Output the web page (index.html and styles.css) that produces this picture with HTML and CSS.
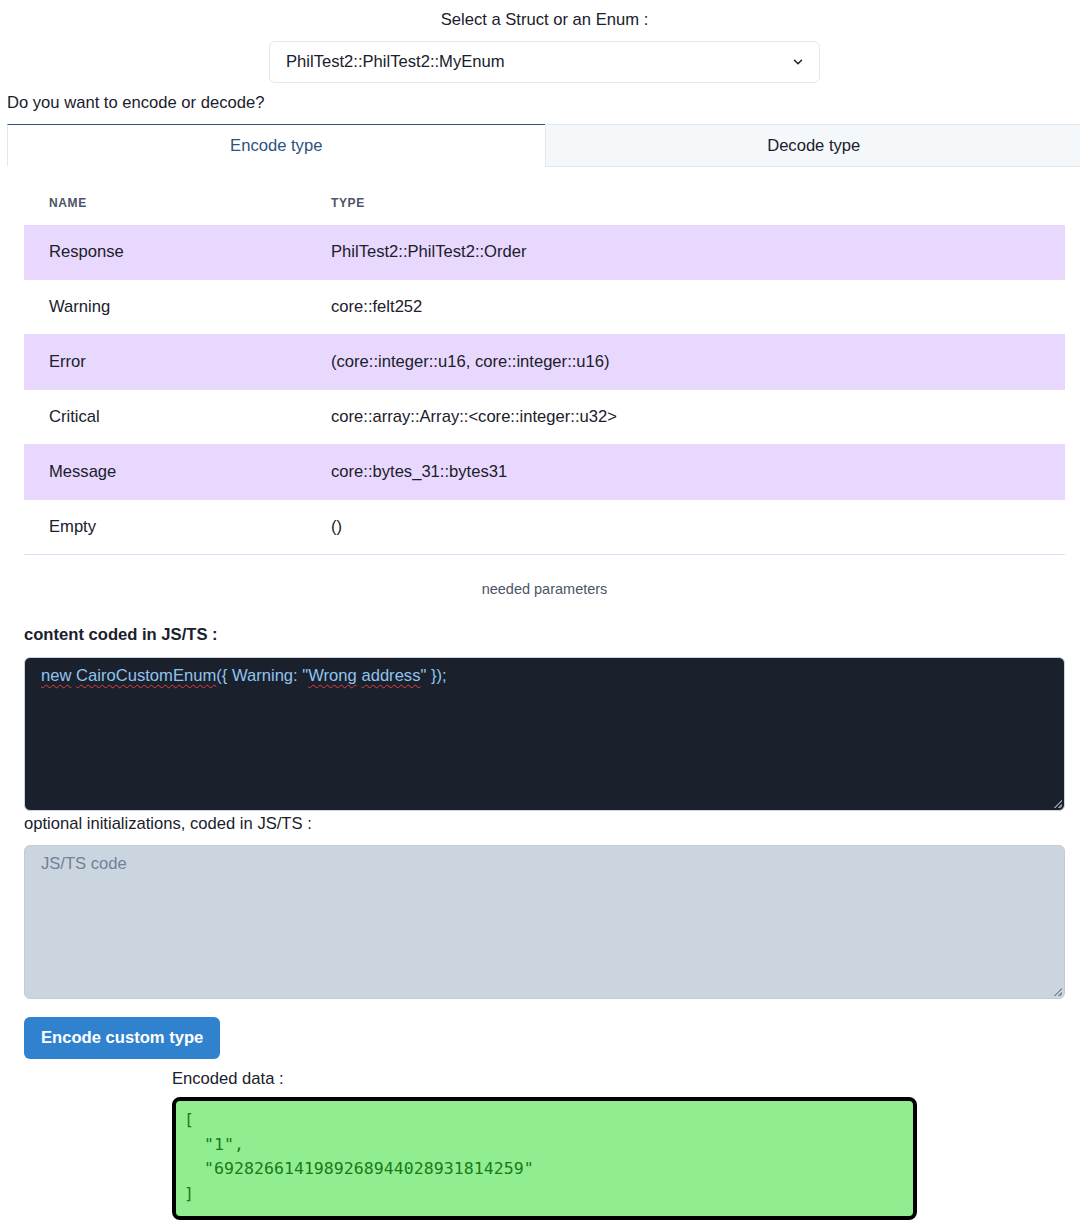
FILE: index.html
```html
<!DOCTYPE html>
<html>
<head>
<meta charset="utf-8">
<link rel="stylesheet" href="styles.css">
</head>
<body>
<div class="page">
  <div class="select-label">Select a Struct or an Enum :</div>
  <div class="select-wrap">
    <div class="select">
      <span>PhilTest2::PhilTest2::MyEnum</span>
      <svg class="chev" width="12" height="12" viewBox="0 0 24 24"><path d="M5 8.5l7 7 7-7" fill="none" stroke="#1a202c" stroke-width="3" stroke-linecap="round" stroke-linejoin="round"/></svg>
    </div>
  </div>
  <div class="question">Do you want to encode or decode?</div>
  <div class="tabs">
    <div class="tab active">Encode type</div>
    <div class="tab">Decode type</div>
  </div>
  <div class="panel">
    <table class="params">
      <thead>
        <tr><th class="c1">Name</th><th>Type</th></tr>
      </thead>
      <tbody>
        <tr class="odd"><td class="c1">Response</td><td>PhilTest2::PhilTest2::Order</td></tr>
        <tr><td class="c1">Warning</td><td>core::felt252</td></tr>
        <tr class="odd"><td class="c1">Error</td><td>(core::integer::u16, core::integer::u16)</td></tr>
        <tr><td class="c1">Critical</td><td>core::array::Array::&lt;core::integer::u32&gt;</td></tr>
        <tr class="odd"><td class="c1">Message</td><td>core::bytes_31::bytes31</td></tr>
        <tr><td class="c1">Empty</td><td>()</td></tr>
      </tbody>
    </table>
    <div class="caption">needed parameters</div>
  </div>
  <div class="section">
    <div class="bold-label">content coded in JS/TS :</div>
    <div class="code dark"><span class="sp">new</span> <span class="sp">CairoCustomEnum</span>({ Warning: "<span class="sp">Wrong</span> <span class="sp">address</span>" });<span class="grip"></span></div>
    <div class="label">optional initializations, coded in JS/TS :</div>
    <div class="code light"><span class="ph">JS/TS code</span><span class="grip"></span></div>
    <button class="btn">Encode custom type</button>
    <div class="result">
      <div class="label">Encoded data :</div>
      <pre class="out">[
  "1",
  "6928266141989268944028931814259"
]</pre>
    </div>
  </div>
</div>
</body>
</html>
```
FILE: styles.css
```css
html, body {
  margin: 0;
  padding: 0;
  overflow: hidden;
  background: #fff;
}
body {
  font-family: "Liberation Sans", Arial, sans-serif;
  font-size: 16.6px;
  line-height: 24px;
  color: #1a202c;
}
.page {
  width: 1075px;
  margin-left: 7px;
}
.select-label {
  margin-top: 8px;
  text-align: center;
}
.select-wrap {
  display: flex;
  justify-content: center;
  margin-top: 9px;
}
.select {
  box-sizing: border-box;
  width: 551px;
  height: 42px;
  border: 1px solid #e2e8f0;
  border-radius: 6px;
  display: flex;
  align-items: center;
  justify-content: space-between;
  padding: 0 15px 0 16px;
}
.chev { display: block; }
.question {
  margin-top: 8px;
}
.tabs {
  display: flex;
  margin-top: 9px;
}
.tab {
  flex: 1;
  box-sizing: border-box;
  height: 43px;
  display: flex;
  align-items: center;
  justify-content: center;
  background: #f5f8fb;
  border-top: 1px solid #e2e8f0;
  border-bottom: 1px solid #e2e8f0;
  border-left: 1px solid #e2e8f0;
  color: #1a202c;
}
.tab.active {
  background: #fff;
  border-top: 1px solid #2c5282;
  border-bottom: 1px solid transparent;
  color: #2c5282;
}
.panel {
  padding: 16px 17px 16px 17px;
}
.params {
  width: 100%;
  border-collapse: collapse;
}
.params th {
  text-align: left;
  font-size: 12px;
  line-height: 16px;
  font-weight: bold;
  text-transform: uppercase;
  letter-spacing: 0.05em;
  color: #4a5568;
  padding: 12px 24px 13px 25px;
  border-bottom: 1px solid transparent;
}
.params td {
  padding: 15px 24px 15px 25px;
  line-height: 24px;
  border-bottom: 1px solid #e9d8fd;
}
.params .c1 { width: 233px; }
.params tr.odd td {
  background: #e9d8fd;
}
.caption {
  margin-top: 16px;
  padding: 8px 24px;
  font-size: 14.5px;
  line-height: 20px;
  text-align: center;
  color: #4a5568;
}
.section {
  padding: 0 17px;
}
.bold-label {
  font-weight: bold;
}
.code {
  position: relative;
  box-sizing: border-box;
  height: 154px;
  border-radius: 6px;
  padding: 8px 16px 6px;
  line-height: 20px;
}
.dark {
  margin-top: 10px;
  background: #1a202c;
  border: 1px solid #cbd5e0;
  color: #90c4ec;
}
.light {
  margin-top: 10px;
  background: #cbd5e0;
  border: 1px solid #c2ccd8;
}
.label {
  position: relative;
  top: 1px;
}
.ph { color: #718096; }
.sp {
  text-decoration: underline wavy #e53e3e;
  text-decoration-thickness: 1px;
  text-underline-offset: 3px;
}
.grip {
  position: absolute;
  right: 2px;
  bottom: 2px;
  width: 8px;
  height: 8px;
  background:
    linear-gradient(135deg, transparent 45%, #8a8f98 45%, #8a8f98 58%, transparent 58%),
    linear-gradient(135deg, transparent 75%, #8a8f98 75%, #8a8f98 88%, transparent 88%);
}
.btn {
  display: block;
  margin-top: 18px;
  height: 42px;
  padding: 0 17px;
  border: none;
  border-radius: 6px;
  background: #3182ce;
  color: #fff;
  font-family: "Liberation Sans", Arial, sans-serif;
  font-weight: bold;
  font-size: 16.6px;
}
.result {
  width: 745px;
  margin: 7px auto 0;
}
.out {
  margin: 7px 0 0;
  box-sizing: border-box;
  height: 123px;
  background: #90ee90;
  border: 4px solid #000;
  border-radius: 8px;
  padding: 7px 10px 5px 8px;
  font-family: "DejaVu Sans Mono", monospace;
  font-size: 16.6px;
  line-height: 24.6px;
  color: #1a7a1a;
}
```
